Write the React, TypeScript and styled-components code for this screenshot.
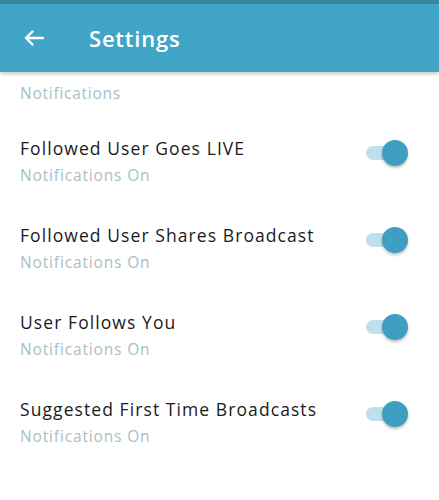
import styled, { createGlobalStyle } from "styled-components";

interface ISetting {
  id: string;
  title: string;
  status: string;
  on: boolean;
}

const settings: ISetting[] = [
  { id: "live", title: "Followed User Goes LIVE", status: "Notifications On", on: true },
  { id: "shares", title: "Followed User Shares Broadcast", status: "Notifications On", on: true },
  { id: "follows", title: "User Follows You", status: "Notifications On", on: true },
  { id: "suggested", title: "Suggested First Time Broadcasts", status: "Notifications On", on: true },
];

const GlobalStyle = createGlobalStyle`
  html, body {
    margin: 0;
    padding: 0;
    background: #ffffff;
  }
  body {
    font-family: "Open Sans", Lato, "Liberation Sans", sans-serif;
    -webkit-font-smoothing: antialiased;
  }
`;

const Page = styled.div`
  width: 439px;
  height: 500px;
  overflow: hidden;
  background: #ffffff;
`;

const StatusStrip = styled.div`
  height: 4px;
  background: #3a889d;
`;

const Header = styled.header`
  position: relative;
  z-index: 1;
  height: 68px;
  display: flex;
  align-items: center;
  padding-left: 24px;
  background: #40a5c6;
  box-shadow: 0 2px 4px rgba(0, 0, 0, 0.22);
`;

const BackButton = styled.button`
  width: 20px;
  height: 20px;
  padding: 0;
  border: none;
  background: none;
  display: flex;
  align-items: center;
  margin-right: 45px;
  cursor: pointer;
`;

const Title = styled.h1`
  margin: 0;
  font-size: 22px;
  font-weight: 600;
  color: #ffffff;
  letter-spacing: 0.8px;
`;

const SectionLabel = styled.div`
  height: 46px;
  box-sizing: border-box;
  padding: 10px 0 0 20px;
  font-size: 15.5px;
  line-height: 22px;
  letter-spacing: 0.75px;
  color: #a9bec6;
`;

const Row = styled.div`
  height: 87px;
  box-sizing: border-box;
  padding: 18px 33px 0 20px;
  display: flex;
  justify-content: space-between;
  align-items: flex-start;
`;

const Texts = styled.div`
  display: flex;
  flex-direction: column;
  gap: 4px;
`;

const RowTitle = styled.span`
  font-size: 17.5px;
  line-height: 24px;
  letter-spacing: 1.08px;
  color: #1a1a1c;
`;

const RowStatus = styled.span`
  font-size: 15.5px;
  line-height: 22px;
  letter-spacing: 0.85px;
  color: #a9bec6;
`;

const Switch = styled.div<{ $on: boolean }>`
  position: relative;
  width: 40px;
  height: 14px;
  margin-top: 10px;
  border-radius: 7px;
  background: ${(p) => (p.$on ? "#bfe0eb" : "#d5d9db")};
`;

const Thumb = styled.span<{ $on: boolean }>`
  position: absolute;
  top: -6px;
  left: ${(p) => (p.$on ? "16px" : "-2px")};
  width: 26px;
  height: 26px;
  border-radius: 50%;
  background: ${(p) => (p.$on ? "#3e9fc2" : "#f4f4f4")};
  box-shadow: 0 2px 3px rgba(0, 0, 0, 0.25);
`;

function App() {
  return (
    <>
      <GlobalStyle />
      <Page>
        <StatusStrip />
        <Header>
          <BackButton aria-label="Back">
            <svg width="20" height="16" viewBox="0 0 20 16" fill="none">
              <path
                d="M19 8H2.5M8.5 1.5L2 8l6.5 6.5"
                stroke="#ffffff"
                strokeWidth="2.4"
                strokeLinecap="round"
                strokeLinejoin="round"
              />
            </svg>
          </BackButton>
          <Title>Settings</Title>
        </Header>
        <SectionLabel>Notifications</SectionLabel>
        {settings.map((s) => (
          <Row key={s.id}>
            <Texts>
              <RowTitle>{s.title}</RowTitle>
              <RowStatus>{s.status}</RowStatus>
            </Texts>
            <Switch $on={s.on}>
              <Thumb $on={s.on} />
            </Switch>
          </Row>
        ))}
      </Page>
    </>
  );
}

export default App;
